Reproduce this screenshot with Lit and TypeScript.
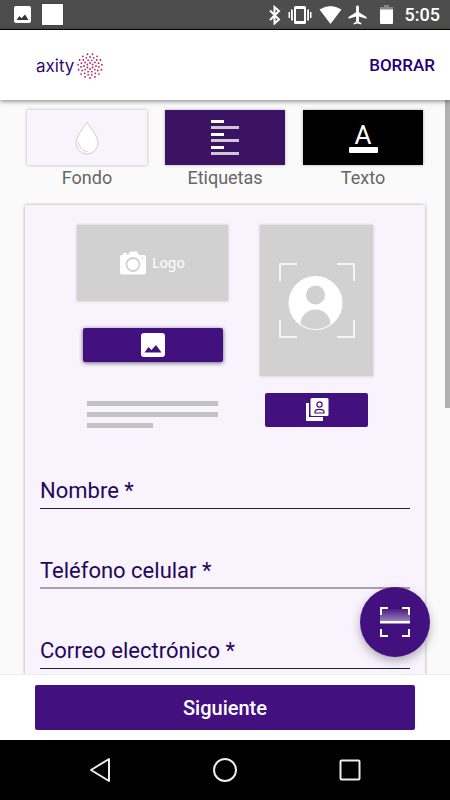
import { LitElement, html, svg, css } from "lit";
import { customElement } from "lit/decorators.js";

const RINGS = [
  { r: 3, n: 6 },
  { r: 6, n: 10 },
  { r: 9, n: 15 },
  { r: 12, n: 15 },
];

const DOTS = RINGS.flatMap(({ r, n }, ring) =>
  Array.from({ length: n }, (_, i) => {
    const a = ((i + ring * 0.5) / n) * Math.PI * 2 - Math.PI / 2;
    return {
      x: 14 + r * Math.cos(a),
      y: 14 + r * Math.sin(a),
      fill: (i + ring) % 2 ? "#f5142d" : "#7d2c96",
    };
  })
);

const FIELDS = [
  { id: "nombre", label: "Nombre *", type: "text", soft: false },
  { id: "telefono", label: "Teléfono celular *", type: "tel", soft: true },
  { id: "correo", label: "Correo electrónico *", type: "email", soft: false },
];

@customElement("status-bar")
class StatusBar extends LitElement {
  static styles = css`
    :host {
      display: flex;
      justify-content: space-between;
      align-items: center;
      box-sizing: border-box;
      height: 30px;
      padding: 0 10px 0 14px;
      background: #4d4d4d;
      border-bottom: 1px solid #000;
      color: #fff;
    }
    .group { display: flex; align-items: center; }
    .left { gap: 11px; }
    .square { width: 21px; height: 21px; background: #fff; box-shadow: 0 0 1px #222; }
    .time { font: 500 18px/24px Roboto, sans-serif; margin-left: 12px; }
    svg { display: block; fill: currentColor; }
    .vibrate { margin: 0 7px; }
    .plane { margin: 0 13px 0 6px; }
  `;
  render() {
    return html`
      <div class="group left">
        <svg width="17" height="17" viewBox="0 0 17 17">
          <rect width="17" height="17" rx="2" />
          <path fill="#333" d="M2.500 14l3-4 2 2.300L11 8.500l3.500 5.500z" />
        </svg>
        <div class="square"></div>
      </div>
      <div class="group">
        <svg width="13" height="20" viewBox="0 0 13 20">
          <path fill="none" stroke="#fff" stroke-width="2" d="M2 5.500l9 9-4.500 4V2l4.500 4-9 9" />
        </svg>
        <svg class="vibrate" width="24" height="20" viewBox="0 0 24 20">
          <path fill-rule="evenodd" d="M7.500 1h9A1.500 1.500 0 0 1 18 2.500v15a1.500 1.500 0 0 1-1.500 1.500h-9A1.500 1.500 0 0 1 6 17.500v-15A1.500 1.500 0 0 1 7.500 1zM8 4v12h8V4z" />
          <path d="M3 4.500h1.800v11H3zM19.200 4.500H21v11h-1.800zM.500 7H2v6H.500zM22 7h1.500v6H22z" />
        </svg>
        <svg width="23" height="20" viewBox="0 0 23 20">
          <path d="M.5 4.500Q11.500-2.500 22.500 4.500L11.500 19z" />
        </svg>
        <svg class="plane" width="19" height="20" viewBox="2 2 20 20">
          <path d="M21.500 16v-2l-8-5V3.500a1.500 1.500 0 0 0-3 0V9l-8 5v2l8-2.500V19l-2.500 1.500V22l4-1 4 1v-1.500L13.500 19v-5.500z" />
        </svg>
        <svg width="13" height="19" viewBox="0 0 13 19">
          <path fill="#888" d="M4 0h5v2h4v3H0V2h4z" />
          <path d="M0 4.500h13V18a1 1 0 0 1-1 1H1a1 1 0 0 1-1-1z" />
        </svg>
        <span class="time">5:05</span>
      </div>
    `;
  }
}

@customElement("nav-bar")
class NavBar extends LitElement {
  static styles = css`
    :host {
      display: flex;
      justify-content: center;
      align-items: center;
      gap: 85px;
      height: 60px;
      background: #000;
    }
    button { display: block; padding: 0; border: 0; background: none; }
    svg { display: block; fill: none; stroke: #ececec; stroke-width: 2; stroke-linejoin: round; }
  `;
  render() {
    return html`
      <button aria-label="Atrás">
        <svg width="40" height="40" viewBox="0 0 40 40"><path d="M11 20l18-11v22z" /></svg>
      </button>
      <button aria-label="Inicio">
        <svg width="40" height="40" viewBox="0 0 40 40"><circle cx="20" cy="20" r="11" /></svg>
      </button>
      <button aria-label="Recientes">
        <svg width="40" height="40" viewBox="0 0 40 40"><rect x="10.500" y="10.500" width="19" height="19" rx="1" /></svg>
      </button>
    `;
  }
}

@customElement("app-root")
class AppRoot extends LitElement {
  static styles = css`
    :host {
      display: flex;
      flex-direction: column;
      height: 100vh;
      font-family: Roboto, sans-serif;
      background: #fafafa;
      color: #24075c;
    }
    * { box-sizing: border-box; }
    button { font-family: inherit; border: 0; padding: 0; }
    svg { display: block; }
    status-bar, nav-bar, .top, .footer { flex: none; }

    .top {
      display: flex;
      align-items: center;
      justify-content: space-between;
      height: 70px;
      padding: 0 15px 0 36px;
      background: #fff;
      box-shadow: 0 1px 5px rgba(0, 0, 0, 0.5);
      z-index: 1;
    }
    .brand { display: flex; align-items: center; gap: 2px; padding-top: 2px; color: #2c0a6b; text-decoration: none; }
    .brand-name { font: 400 17px/24px Inter, sans-serif; }
    .clear { background: none; color: #24007a; font-size: 17px; line-height: 24px; font-weight: 500; }

    .stage { position: relative; flex: 1; min-height: 0; display: flex; flex-direction: column; }
    .scroll { flex: 1; min-height: 0; overflow: hidden; padding: 10px 25px 0; }
    .scrollbar { position: absolute; top: 0; right: 0; width: 5px; height: 308px; background: #b1b1b1; }

    .tools { display: grid; grid-template-columns: repeat(3, 1fr); gap: 18px; padding: 0 2px; }
    .tool { display: flex; flex-direction: column; background: none; color: #666; font-size: 18px; line-height: 26px; }
    .swatch {
      display: flex;
      align-items: center;
      justify-content: center;
      width: 100%;
      height: 55px;
      background: #f9f3fe;
      box-shadow: 0 0 3px rgba(0, 0, 0, 0.3);
    }
    .tool span { align-self: center; }
    .swatch.labels { background: #3c1263; }
    .swatch.text { flex-direction: column; background: #000; color: #fff; }
    .letter { font-size: 26px; line-height: 24px; }
    .underline { width: 29px; height: 6px; border-radius: 1px; background: #fff; }

    .card {
      margin-top: 14px;
      padding: 20px 15px 40px;
      background: #f9f3fe;
      box-shadow: 0 0 3px rgba(0, 0, 0, 0.35);
    }
    .media { display: flex; justify-content: center; gap: 32px; }
    .column { display: flex; flex-direction: column; align-items: center; }
    .logo-box, .photo-box {
      display: flex;
      align-items: center;
      justify-content: center;
      background: #d1d1d1;
      box-shadow: 0 0 3px rgba(0, 0, 0, 0.2);
    }
    .logo-box { width: 151px; height: 76px; gap: 6px; color: #fff; font: 400 14px/20px "Noto Sans", sans-serif; }
    .photo-box { width: 113px; height: 151px; }
    .pick {
      display: flex;
      align-items: center;
      justify-content: center;
      height: 34px;
      border-radius: 2px;
      background: #43107f;
    }
    .pick.image { width: 140px; margin-top: 27px; box-shadow: 0 1px 4px rgba(0, 0, 0, 0.6); }
    .pick.contact { width: 103px; margin-top: 17px; }
    .lines { display: flex; flex-direction: column; gap: 6px; width: 131px; margin-top: 39px; }
    .line { height: 5px; background: #c2c2c2; }
    .line.short { width: 50%; }

    .fields { display: flex; flex-direction: column; gap: 40px; margin-top: 41px; }
    .field { display: grid; }
    .field label, .field input { grid-area: 1 / 1; height: 40px; font: 400 22px/40px Roboto, sans-serif; color: #24075c; }
    .field label { pointer-events: none; line-height: 44px; }
    .field input {
      width: 100%;
      min-width: 0;
      padding: 0;
      border: 0;
      border-bottom: 1px solid #222;
      border-radius: 0;
      background: none;
      outline: 0;
    }
    .field.soft input { border-bottom: 2px solid #a9a3ae; }

    .scan {
      position: absolute;
      right: 20px;
      bottom: 17px;
      display: flex;
      align-items: center;
      justify-content: center;
      width: 70px;
      height: 70px;
      border-radius: 50%;
      background: #43107f;
      box-shadow: 0 4px 10px rgba(0, 0, 0, 0.3);
    }

    .footer { padding: 10px 35px; border-top: 1px solid #eee; background: #fff; }
    .next {
      display: block;
      width: 100%;
      height: 45px;
      border-radius: 2px;
      background: #43107f;
      color: #fff;
      font-size: 20px;
      line-height: 24px;
      font-weight: 500;
    }
  `;

  render() {
    return html`
      <status-bar></status-bar>
      <header class="top">
        <a class="brand" href="#">
          <span class="brand-name">axity</span>
          <svg width="28" height="28" viewBox="0 0 28 28">
            ${DOTS.map((d) => svg`<circle cx=${d.x} cy=${d.y} r="0.9" fill=${d.fill} />`)}
          </svg>
        </a>
        <button class="clear">BORRAR</button>
      </header>

      <main class="stage">
        <div class="scroll">
          <div class="tools">
            <button class="tool">
              <div class="swatch">
                <svg width="26" height="34" viewBox="0 0 26 34">
                  <path fill="#fff" stroke="#d0cbd3" d="M13 1C9 8 2 15 2 22a11 11 0 0 0 22 0C24 15 17 8 13 1z" />
                  <path fill="none" stroke="#d0cbd3" d="M4.500 21c0 5 4 9 9 9.500" />
                </svg>
              </div>
              <span>Fondo</span>
            </button>
            <button class="tool">
              <div class="swatch labels">
                <svg width="28" height="36" viewBox="0 0 28 36">
                  <path fill="#fff" d="M0 0h13v3H0zM0 13h13v3H0zM0 26h13v3H0z" />
                  <path fill="#cfc6d6" d="M0 6h28v3H0zM0 19h28v3H0zM0 32h28v3H0z" />
                </svg>
              </div>
              <span>Etiquetas</span>
            </button>
            <button class="tool">
              <div class="swatch text">
                <div class="letter">A</div>
                <div class="underline"></div>
              </div>
              <span>Texto</span>
            </button>
          </div>

          <form class="card">
            <div class="media">
              <div class="column">
                <div class="logo-box">
                  <svg width="26" height="24" viewBox="0 0 26 24">
                    <path fill="#fff" d="M2 4h1V2h4v2h1l2-3.500h7L19 4h5a2 2 0 0 1 2 2v15.500a2 2 0 0 1-2 2H2a2 2 0 0 1-2-2V6a2 2 0 0 1 2-2z" />
                    <circle cx="13" cy="13.500" r="6.500" fill="#fff" stroke="#d1d1d1" stroke-width="1.800" />
                    <circle cx="22.500" cy="7" r="0.800" fill="#c4c4c4" />
                  </svg>
                  <span>Logo</span>
                </div>
                <button type="button" class="pick image" aria-label="Elegir imagen">
                  <svg width="24" height="24" viewBox="0 0 24 24">
                    <rect width="24" height="24" rx="3" fill="#fff" />
                    <path fill="#43107f" d="M3.500 19.500l4-5.500 3 3 4.500-5 5.500 7.500z" />
                  </svg>
                </button>
                <div class="lines">
                  <div class="line"></div>
                  <div class="line"></div>
                  <div class="line short"></div>
                </div>
              </div>
              <div class="column">
                <div class="photo-box">
                  <svg width="76" height="76" viewBox="0 0 76 76">
                    <path fill="none" stroke="#fff" stroke-width="1.500" d="M1 18V1h17M58 1h17v17M1 57v17h17M58 74h17V57" />
                    <circle cx="36.500" cy="40" r="27" fill="#fff" />
                    <circle cx="36.500" cy="32" r="9.500" fill="#d1d1d1" />
                    <path fill="#d1d1d1" d="M21.500 61a15 14.500 0 0 1 30 0Q45 66 36.500 66T21.500 61z" />
                  </svg>
                </div>
                <button type="button" class="pick contact" aria-label="Elegir foto de contacto">
                  <svg width="24" height="24" viewBox="0 0 24 24">
                    <path fill="#fff" d="M1 5h3v14h14v4H2a1 1 0 0 1-1-1z" />
                    <rect x="5.500" width="18" height="18" rx="1.500" fill="#fff" />
                    <circle cx="14.500" cy="6.500" r="2.600" fill="none" stroke="#43107f" stroke-width="1.200" />
                    <path fill="none" stroke="#43107f" stroke-width="1.200" d="M10 15v-1.200c0-3.300 9-3.300 9 0V15z" />
                  </svg>
                </button>
              </div>
            </div>
            <div class="fields">
              ${FIELDS.map(
                (f) => html`
                  <div class="field ${f.soft ? "soft" : ""}">
                    <input id=${f.id} type=${f.type} required />
                    <label for=${f.id}>${f.label}</label>
                  </div>
                `
              )}
            </div>
          </form>
        </div>
        <div class="scrollbar"></div>
        <button class="scan" aria-label="Escanear">
          <svg width="30" height="30" viewBox="0 0 30 30">
            <defs>
              <linearGradient id="beam" x1="0" y1="0" x2="0" y2="1">
                <stop offset="0" stop-color="#fff" stop-opacity="0.050" />
                <stop offset="1" stop-color="#fff" stop-opacity="0.500" />
              </linearGradient>
            </defs>
            <rect x="0" y="2" width="30" height="13" fill="url(#beam)" />
            <rect y="14" width="30" height="2.500" fill="#fff" />
            <path fill="none" stroke="#fff" stroke-width="2" d="M1 8V1h7M22 1h7v7M1 22v7h7M22 29h7v-7" />
          </svg>
        </button>
      </main>

      <footer class="footer"><button class="next">Siguiente</button></footer>
      <nav-bar></nav-bar>
    `;
  }
}
